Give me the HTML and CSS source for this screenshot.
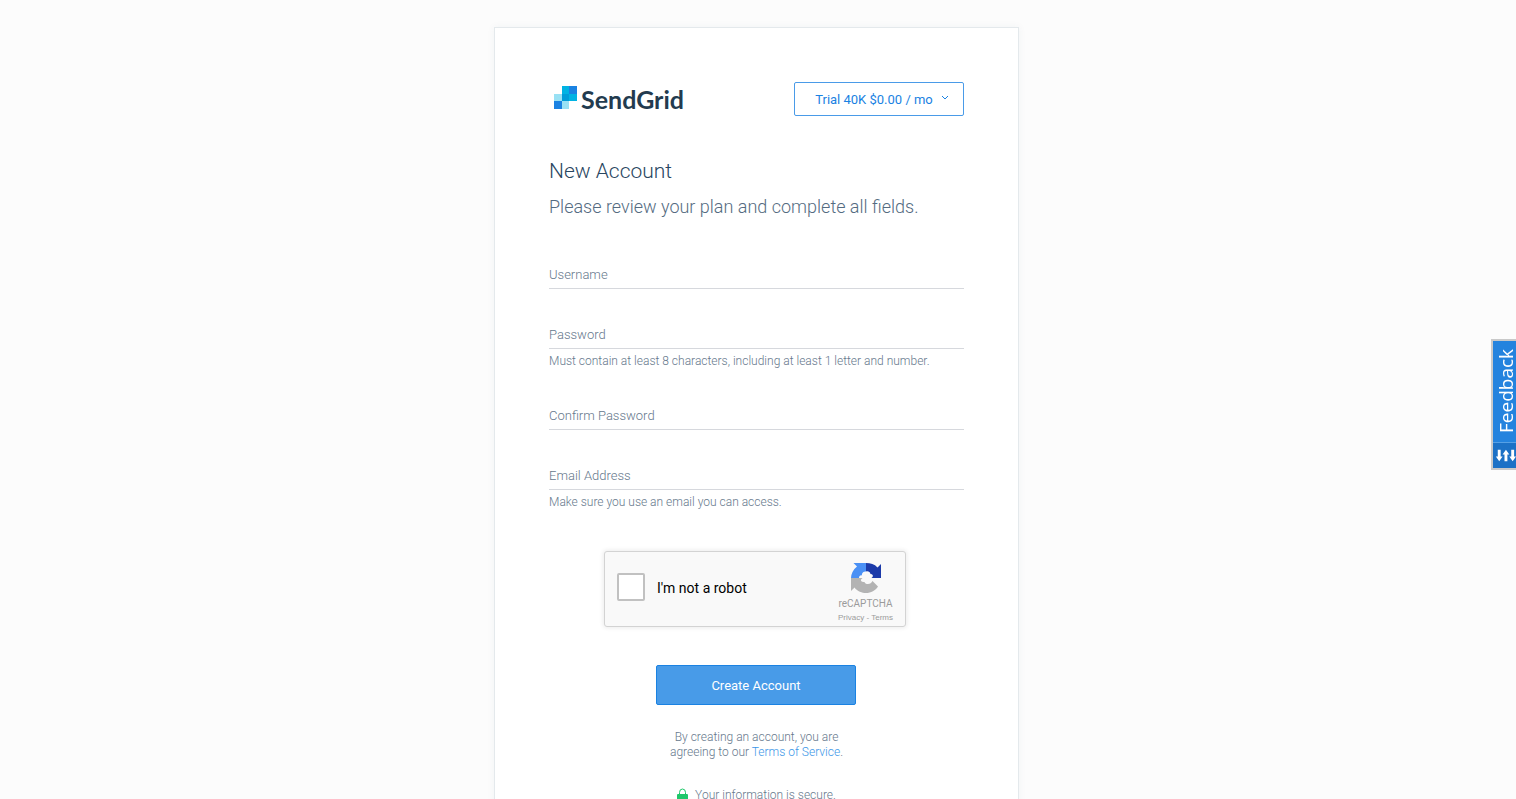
FILE: index.html
```html
<!DOCTYPE html>
<html lang="en">
<head>
<meta charset="utf-8">
<meta name="viewport" content="width=device-width, initial-scale=1">
<title>SendGrid - New Account</title>
<link rel="stylesheet" href="styles.css">
</head>
<body>
<main class="card">
  <header class="card-header">
    <div class="logo">
      <svg class="logo-mark" viewBox="0 0 23 23" aria-hidden="true">
        <path fill="#99e1f4" d="M0 8h8v7H0zM8 15h7v8H8z"/>
        <path fill="#1a82e2" d="M0 15h8v8H0zM15 0h8v8h-8z"/>
        <path fill="#00b3e3" d="M8 0h7v8H8zM15 8h8v7h-8z"/>
        <path fill="#009dd9" d="M8 8h7v7H8z"/>
      </svg>
      <span class="logo-name">SendGrid</span>
    </div>
    <button class="plan" type="button">
      <span>Trial 40K $0.00 / mo</span>
      <svg class="chevron" viewBox="0 0 8 6" aria-hidden="true"><path d="M1 1l3 3 3-3"/></svg>
    </button>
  </header>
  <h1 class="title">New Account</h1>
  <p class="subtitle">Please review your plan and complete all fields.</p>
  <form class="form">
    <div class="field">
      <div class="control"><label for="username">Username</label><input id="username" type="text"></div>
    </div>
    <div class="field">
      <div class="control"><label for="password">Password</label><input id="password" type="password"></div>
      <p class="hint">Must contain at least 8 characters, including at least 1 letter and number.</p>
    </div>
    <div class="field">
      <div class="control"><label for="confirm">Confirm Password</label><input id="confirm" type="password"></div>
    </div>
    <div class="field">
      <div class="control"><label for="email">Email Address</label><input id="email" type="email"></div>
      <p class="hint">Make sure you use an email you can access.</p>
    </div>
    <div class="captcha">
      <input class="captcha-box" id="robot" type="checkbox">
      <label class="captcha-label" for="robot">I'm not a robot</label>
      <div class="captcha-brand">
        <svg class="captcha-logo" viewBox="0 0 32 32" aria-hidden="true">
          <path fill="#1c3aa9" d="M31 16V2l-3.500 3.500C24.500 2 20.500 1 16 1v8.500c2.500-.5 4 .5 4.500 2.500 2 0 3 1.500 2 3l-1 1z"/>
          <path fill="#4a90f5" d="M16 1H3.500L7 4.500C3 7.500 1 12 1 16h8c0-2 1.500-3 3-2.500C11.500 11 13.500 9.500 16 9.500z"/>
          <path fill="#b3b3b3" d="M1 16v13l3.500-3.500C7.500 29.500 12 31 16 31c5 0 9.500-2.500 12-6.500L22.500 19c-1 2-2.500 3-4.500 3-2 0-3-.5-3.500-2-2.500.5-4-1-3.500-2.500L12.500 16z"/>
        </svg>
        <span class="captcha-name">reCAPTCHA</span>
        <span class="captcha-links"><a href="#privacy">Privacy</a> - <a href="#conditions">Terms</a></span>
      </div>
    </div>
    <button class="submit" type="submit">Create Account</button>
  </form>
  <p class="terms">By creating an account, you are<br>agreeing to our <a href="#terms">Terms of Service</a>.</p>
  <p class="secure">
    <svg class="lock" viewBox="0 0 11 15" aria-hidden="true"><path fill="none" stroke="#1fc76a" d="M2.500 6V4.500a3 3.500 0 0 1 6 0V6"/><rect y="6" width="11" height="8" rx="1" fill="#1fc76a"/></svg>
    <span>Your information is secure.</span>
  </p>
</main>
<button class="feedback" type="button">
  <span class="feedback-text">Feedback</span>
  <svg class="feedback-icon" viewBox="0 0 23 26" aria-hidden="true"><path d="M4.500 7h3v7h2L6 19l-3.500-5h2zM11.500 19h3v-7h2L13 7l-3.500 5h2zM18.500 7h3v7h2L20 19l-3.500-5h2z"/></svg>
</button>
</body>
</html>
```
FILE: styles.css
```css
* { box-sizing: border-box; }

html { overflow: hidden; }

body {
  margin: 0;
  padding: 27px 3px 0 0;
  background: #fcfcfc;
  color: #66788c;
  font-family: Roboto, "Liberation Sans", sans-serif;
  font-weight: 300;
}

h1, p { margin: 0; }

a { color: inherit; text-decoration: none; }

button, input { font: inherit; }

.card {
  max-width: 525px;
  margin: 0 auto;
  padding: 54px 54px 60px;
  background: #fff;
  border: 1px solid #e4e9ec;
  box-shadow: 0 0 8px rgba(40, 70, 90, 0.05);
}

.card-header {
  display: flex;
  align-items: center;
  justify-content: space-between;
}

.logo {
  display: flex;
  align-items: flex-start;
  gap: 4px;
  padding-left: 5px;
}

.logo-mark { width: 23px; height: 23px; }

.logo-name {
  color: #233b4f;
  font: 700 25px/26px Lato, sans-serif;
}

.plan {
  display: flex;
  align-items: center;
  justify-content: center;
  gap: 8px;
  width: 170px;
  height: 34px;
  padding: 0 8px 0 14px;
  background: #fff;
  border: 1px solid #4a9be8;
  border-radius: 2px;
  color: #1a82e2;
  font-size: 13px;
  font-weight: 400;
}

.chevron {
  width: 8px;
  height: 6px;
  margin-bottom: 2px;
  fill: none;
  stroke: #1a82e2;
}

.title {
  margin-top: 40px;
  color: #294661;
  font-size: 21px;
  font-weight: 300;
  line-height: 30px;
}

.subtitle {
  margin-top: 10px;
  color: #546b81;
  font-size: 18px;
  line-height: 22px;
}

.form {
  display: flex;
  flex-direction: column;
  margin-top: 41px;
}

.field { margin-bottom: 30px; }

.control { display: grid; }

.control label, .control input { grid-area: 1 / 1; }

.control label {
  z-index: 1;
  padding-top: 1px;
  pointer-events: none;
  font-size: 13px;
  line-height: 29px;
}

.control input {
  width: 100%;
  height: 30px;
  padding: 0;
  background: transparent;
  border: 0;
  border-bottom: 1px solid #d6d8dd;
  outline: 0;
}

.hint {
  margin-top: 4px;
  font-size: 12px;
  line-height: 17px;
}

.captcha {
  display: flex;
  align-items: center;
  align-self: center;
  width: 302px;
  height: 76px;
  margin: 10px 3px 0 0;
  padding: 0 12px;
  background: #f9f9f9;
  border: 1px solid #d3d3d3;
  border-radius: 3px;
  box-shadow: 0 0 4px 1px rgba(0, 0, 0, 0.08);
}

.captcha-box {
  appearance: none;
  width: 28px;
  height: 28px;
  margin: 0 12px 4px 0;
  background: #fff;
  border: 2px solid #c1c1c1;
  border-radius: 2px;
}

.captcha-label {
  flex: 1;
  padding-bottom: 2px;
  color: #000;
  font-size: 14px;
  font-weight: 400;
}

.captcha-brand {
  display: flex;
  flex-direction: column;
  align-items: center;
  color: #9b9b9b;
  font-weight: 400;
}

.captcha-logo { width: 32px; height: 32px; margin: 6px 0 1px; }

.captcha-name { font-size: 10px; line-height: 18px; }

.captcha-links { font: 8px/10px "Liberation Sans", sans-serif; }

.submit {
  align-self: center;
  width: 200px;
  height: 40px;
  margin: 38px 1px 0 0;
  background: #489be8;
  border: 1px solid #1a82e2;
  border-radius: 2px;
  color: #fff;
  font-size: 13px;
  font-weight: 400;
}

.terms {
  margin-top: 25px;
  font-size: 12px;
  line-height: 15px;
  text-align: center;
}

.terms a { color: #3a96e8; }

.secure {
  display: flex;
  align-items: center;
  justify-content: center;
  gap: 7px;
  margin-top: 27px;
  font-size: 12px;
  line-height: 16px;
}

.lock { width: 11px; height: 15px; }

.feedback {
  position: fixed;
  top: 339px;
  right: 0;
  display: flex;
  flex-direction: column;
  align-items: flex-end;
  width: 25px;
  padding: 0;
  background: #2483de;
  border: 2px solid #c9c9c9;
  border-right: 0;
  color: #fff;
}

.feedback-text {
  height: 101px;
  padding-bottom: 8px;
  writing-mode: vertical-rl;
  transform: rotate(180deg);
  text-align: right;
  font: 500 19px/20px "Open Sans", sans-serif;
}

.feedback-icon {
  width: 23px;
  height: 26px;
  background: #1c71c6;
  border-top: 1px solid #56a0e5;
  fill: #fff;
}
```
